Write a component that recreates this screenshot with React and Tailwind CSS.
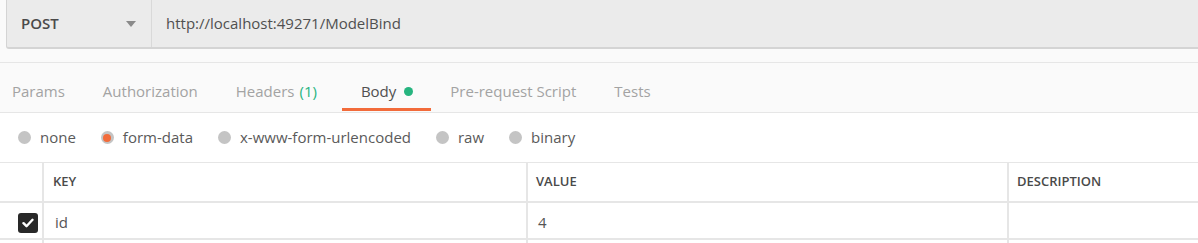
import { useState } from 'react'

const tabs = [
  { name: 'Params' },
  { name: 'Authorization' },
  { name: 'Headers', count: '(1)' },
  { name: 'Body', dot: true },
  { name: 'Pre-request Script' },
  { name: 'Tests' },
]

const bodyModes = ['none', 'form-data', 'x-www-form-urlencoded', 'raw', 'binary']

// filled grey radio, orange centre when picked
function Radio({ on }) {
  return (
    <span className="w-[13px] h-[13px] rounded-full bg-[#c4c4c4] flex items-center justify-center">
      {on && <span className="w-[8px] h-[8px] rounded-full bg-[#f26b3a]" />}
    </span>
  )
}

export default function App() {
  const [active, setActive] = useState('Body')
  const [mode, setMode] = useState('form-data')
  const [checked, setChecked] = useState(true)

  return (
    <div className="w-[1198px] h-[243px] overflow-hidden bg-[#fafafa] font-['Open_Sans',sans-serif] text-[15px] text-[#505050]">
      {/* ---- method + url ---- */}
      <div className="h-[49px] pl-[6px] flex">
        <div className="flex-1 flex bg-[#ebebeb] border-l border-b-2 border-[#d4d4d4] rounded-bl-[3px]">
          <div className="w-[145px] flex items-center justify-between pl-[14px] pr-[15px] border-r border-[#d9d9d9]">
            <span className="font-semibold text-[#4a4a4a]">POST</span>
            <svg width="10" height="6" viewBox="0 0 10 6">
              <path d="M0 0h10L5 6z" fill="#8a8a8a" />
            </svg>
          </div>
          <div className="flex items-center pl-[14px] text-[#505050]">http://localhost:49271/ModelBind</div>
        </div>
      </div>

      {/* ---- request tabs ---- */}
      <div className="mt-[13px] h-[51px] border-t border-b border-[#e6e6e6] flex items-start pl-[12px] bg-[#fafafa]">
        {tabs.map((t, i) => {
          const on = t.name === active
          return (
            <button
              key={t.name}
              onClick={() => setActive(t.name)}
              className={`h-[48px] pt-[12px] flex items-center gap-[8px] border-b-[3px] ${
                i === 0 ? 'pr-[19px]' : t.dot ? 'ml-[6px] pl-[19px] pr-[18px]' : 'px-[19px]'
              } ${on ? 'border-[#f26b3a] text-[#505050]' : 'border-transparent text-[#a3a3a3]'}`}
            >
              <span>
                {t.name}
                {t.count && <span className="ml-[5px] text-[#26b47f]">{t.count}</span>}
              </span>
              {t.dot && <span className="w-[9px] h-[9px] rounded-full bg-[#26b47f]" />}
            </button>
          )
        })}
      </div>

      {/* ---- body mode radios ---- */}
      <div className="h-[49px] bg-white flex items-center pl-[18px] gap-[25px]">
        {bodyModes.map((m) => (
          <label key={m} onClick={() => setMode(m)} className="flex items-center gap-[9px] cursor-pointer">
            <Radio on={m === mode} />
            <span className="text-[#5a5a5a] -mt-[1px]">{m}</span>
          </label>
        ))}
      </div>

      {/* ---- form-data table ---- */}
      <div className="bg-white border-t border-[#e6e6e6]">
        <div className="grid grid-cols-[42px_484px_481px_1fr] h-[40px] border-b-2 border-[#e6e6e6] text-[13px] font-semibold text-[#4a4a4a]">
          <div />
          <div className="border-l-2 border-[#e6e6e6] pl-[9px] flex items-center">KEY</div>
          <div className="border-l-2 border-[#e6e6e6] pl-[8px] flex items-center">VALUE</div>
          <div className="border-l-2 border-[#e6e6e6] pl-[8px] flex items-center">DESCRIPTION</div>
        </div>
        <div className="grid grid-cols-[42px_484px_481px_1fr] h-[37px] border-b-2 border-[#e6e6e6]">
          <div className="flex items-center justify-end pr-[4px] pt-[4px]">
            <button
              onClick={() => setChecked(!checked)}
              className={`w-[20px] h-[20px] rounded-[3px] flex items-center justify-center ${
                checked ? 'bg-[#282828]' : 'border border-[#c4c4c4] bg-white'
              }`}
            >
              {checked && (
                <svg width="12" height="10" viewBox="0 0 12 10">
                  <path d="M1.5 5.2l3 3L10.5 1.8" fill="none" stroke="#fff" strokeWidth="2.4" strokeLinecap="round" strokeLinejoin="round" />
                </svg>
              )}
            </button>
          </div>
          <div className="border-l-2 border-[#e6e6e6] pl-[11px] pt-[3px] flex items-center text-[#555]">id</div>
          <div className="border-l-2 border-[#e6e6e6] pl-[10px] pt-[3px] flex items-center text-[#555]">4</div>
          <div className="border-l-2 border-[#e6e6e6]" />
        </div>
        <div className="grid grid-cols-[42px_484px_481px_1fr] h-[10px]">
          <div />
          <div className="border-l-2 border-[#e6e6e6]" />
          <div className="border-l-2 border-[#e6e6e6]" />
          <div className="border-l-2 border-[#e6e6e6]" />
        </div>
      </div>
    </div>
  )
}
